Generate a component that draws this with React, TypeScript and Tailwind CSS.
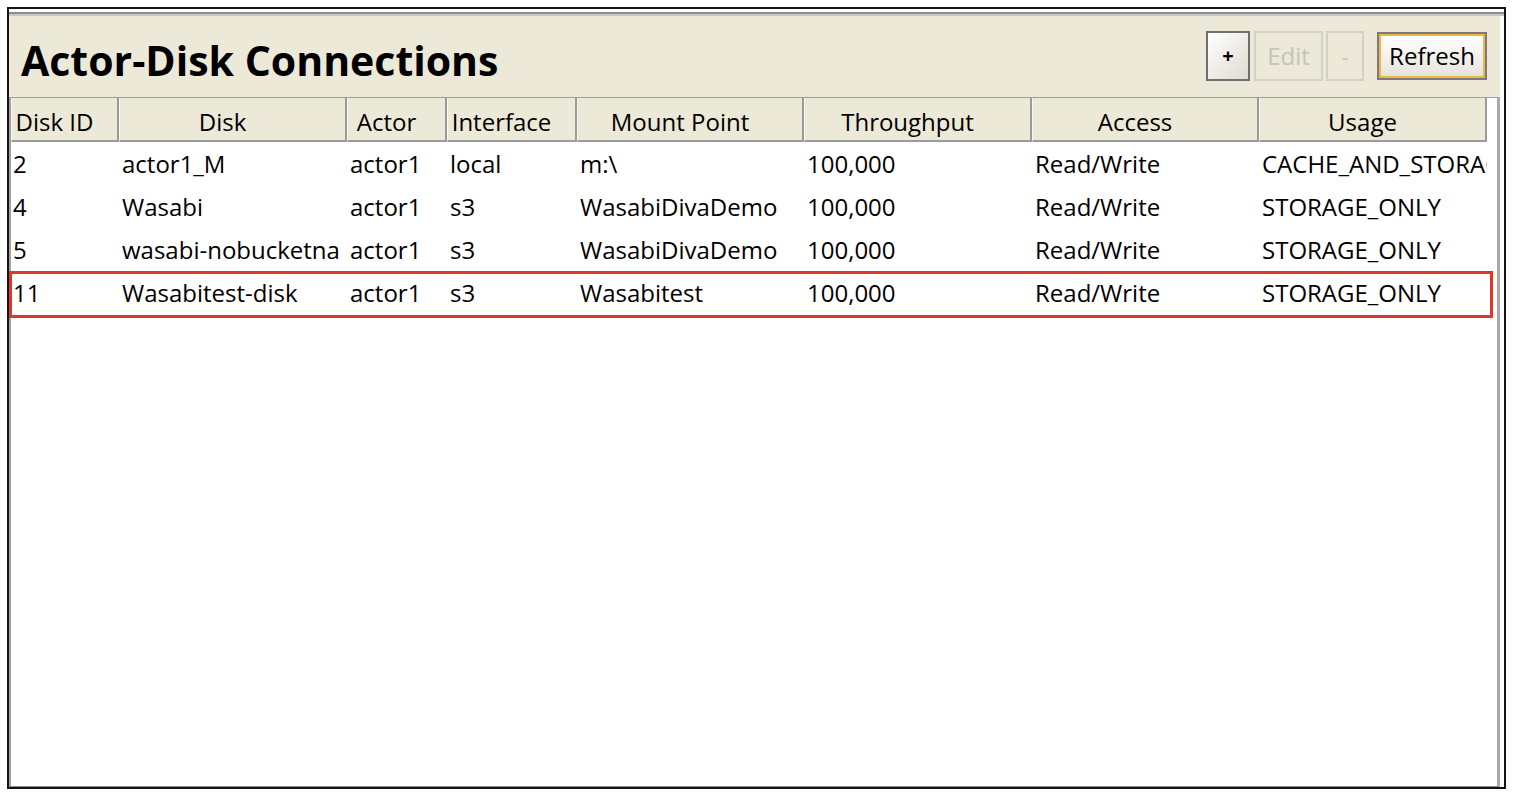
import React from "react";

const cols = [
  { label: "Disk ID", w: "w-[108px]" },
  { label: "Disk", w: "w-[228px]" },
  { label: "Actor", w: "w-[100px]" },
  { label: "Interface", w: "w-[130px]" },
  { label: "Mount Point", w: "w-[227px]" },
  { label: "Throughput", w: "w-[228px]" },
  { label: "Access", w: "w-[227px]" },
  { label: "Usage", w: "w-[228px]" },
];

const rows = [
  ["2", "actor1_M", "actor1", "local", "m:\\", "100,000", "Read/Write", "CACHE_AND_STORAGE"],
  ["4", "Wasabi", "actor1", "s3", "WasabiDivaDemo", "100,000", "Read/Write", "STORAGE_ONLY"],
  ["5", "wasabi-nobucketna", "actor1", "s3", "WasabiDivaDemo", "100,000", "Read/Write", "STORAGE_ONLY"],
  ["11", "Wasabitest-disk", "actor1", "s3", "Wasabitest", "100,000", "Read/Write", "STORAGE_ONLY"],
];

const font = { fontFamily: '"Open Sans", "Noto Sans", sans-serif' };

export default function App() {
  return (
    <div className="w-[1514px] h-[796px] bg-white pt-[7px] pl-[7px]" style={font}>
      <div className="w-[1499px] h-[782px] border-2 border-[#151515] bg-white flex flex-col">
        <div className="h-[3px] bg-white shrink-0" />
        <div className="h-[2px] bg-[#8c8c8c] shrink-0" />
        <div className="h-[2px] bg-[#c9c9c2] shrink-0" />
        <div className="flex-1 flex flex-col bg-[#ECE9D8] mr-[4px] min-h-0">
          {/* Title row */}
          <div className="h-[81px] shrink-0 flex items-center justify-between pl-[12px] pr-[13px]">
            <h1 className="text-[41px] font-bold text-black leading-none mt-[8px] tracking-[0px]">
              Actor-Disk Connections
            </h1>
            <div className="flex items-center mt-[-2px]">
              <button className="w-[44px] h-[50px] border-2 border-[#707070] bg-gradient-to-br from-white to-[#dedbd0] text-[20px] font-bold text-black flex items-center justify-center leading-none">
                +
              </button>
              <button className="ml-[4px] w-[69px] h-[50px] border-2 border-[#d3d1c4] text-[24px] text-[#c6c4b7] flex items-center justify-center leading-none">
                Edit
              </button>
              <button className="ml-[3px] w-[38px] h-[50px] border-2 border-[#d3d1c4] text-[22px] text-[#c6c4b7] flex items-center justify-center leading-none">
                -
              </button>
              <button className="ml-[13px] w-[110px] h-[48px] border-2 border-[#7a7a7a] p-0">
                <span className="w-full h-full border-2 border-[#f2b545] bg-gradient-to-b from-white to-[#e6e4dc] text-[24px] text-black flex items-center justify-center leading-none">
                  Refresh
                </span>
              </button>
            </div>
          </div>
          {/* Table */}
          <div className="flex-1 flex flex-col bg-white border-t border-t-[#9c9c9c] border-l-2 border-l-[#a2a2a2] border-r-[3px] border-r-[#a9a9a9] border-b border-b-[#8a8a8a] min-h-0">
            <div className="flex h-[44px] shrink-0 bg-white">
              {cols.map((c) => (
                <div
                  key={c.label}
                  className={`${c.w} h-full shrink-0 bg-[#ECE9D8] border-l border-l-[#f7f6f0] border-r-2 border-r-[#9b9b9b] border-b-2 border-b-[#9b9b9b] flex items-center justify-center pr-[20px] pt-[5px] text-[24px] text-black whitespace-nowrap leading-none`}
                >
                  {c.label}
                </div>
              ))}
            </div>
            {rows.map((r, i) => (
              <div key={i} className="flex h-[43px] shrink-0 relative">
                {r.map((v, j) => (
                  <div
                    key={j}
                    className={`${cols[j].w} h-full shrink-0 overflow-hidden whitespace-nowrap flex items-center text-[24px] text-black leading-none ${j === 0 ? "pl-[2px]" : "pl-[3px]"}`}
                  >
                    {v}
                  </div>
                ))}
                {i === 3 && (
                  <div className="absolute left-[-2px] top-0 w-[1484px] h-[47px] border-[3px] border-[#e0362b] pointer-events-none" />
                )}
              </div>
            ))}
          </div>
        </div>
      </div>
    </div>
  );
}
